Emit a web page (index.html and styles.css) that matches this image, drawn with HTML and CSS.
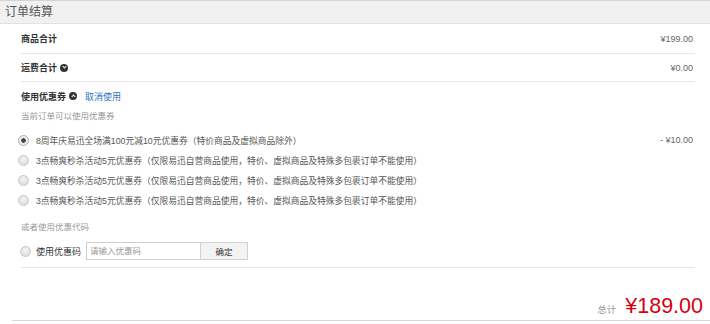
FILE: index.html
```html
<!DOCTYPE html>
<html lang="zh-CN">
<head>
  <meta charset="UTF-8">
  <title>订单结算</title>
  <link rel="stylesheet" href="styles.css">
</head>
<body>
  <div class="panel">
    <div class="panel-head">订单结算</div>
    <div class="panel-body">
      <div class="sum-row">
        <span class="sum-label">商品合计</span>
        <span class="price">¥199.00</span>
      </div>
      <div class="sum-row sum-row-short">
        <span class="sum-label">运费合计 <i class="toggle down"></i></span>
        <span class="price">¥0.00</span>
      </div>
      <div class="coupon-head">
        <span class="sum-label">使用优惠券 <i class="toggle up"></i></span>
        <a class="link" href="#">取消使用</a>
      </div>
      <div class="hint">当前订单可以使用优惠券</div>

      <ul class="coupon-list">
        <li class="coupon">
          <span class="radio checked"></span>
          <span class="coupon-name">8周年庆易迅全场满100元减10元优惠券（特价商品及虚拟商品除外）</span>
          <span class="price">- ¥10.00</span>
        </li>
        <li class="coupon">
          <span class="radio"></span>
          <span class="coupon-name">3点畅爽秒杀活动5元优惠券（仅限易迅自营商品使用，特价、虚拟商品及特殊多包裹订单不能使用）</span>
        </li>
        <li class="coupon">
          <span class="radio"></span>
          <span class="coupon-name">3点畅爽秒杀活动5元优惠券（仅限易迅自营商品使用，特价、虚拟商品及特殊多包裹订单不能使用）</span>
        </li>
        <li class="coupon">
          <span class="radio"></span>
          <span class="coupon-name">3点畅爽秒杀活动5元优惠券（仅限易迅自营商品使用，特价、虚拟商品及特殊多包裹订单不能使用）</span>
        </li>
      </ul>

      <div class="hint hint-code">或者使用优惠代码</div>
      <div class="code-row">
        <span class="radio"></span>
        <span class="code-label">使用优惠码</span>
        <input class="code-input" type="text" placeholder="请输入优惠码">
        <button class="code-btn">确定</button>
      </div>
    </div>

    <div class="total-bar">
      <span class="total-label">总计</span>
      <span class="total-price">¥189.00</span>
    </div>
  </div>
</body>
</html>
```

FILE: styles.css
```css
body {
  margin: 0;
  font-family: "Liberation Sans", "Noto Sans CJK SC", sans-serif;
  color: #333;
  background-color: #fff;
}
.panel {
  width: 710px;
}
.panel-head {
  height: 22px;
  line-height: 22px;
  padding-left: 5px;
  font-size: 12px;
  color: #555;
  background-color: #f1f1f1;
  border-top: 1px solid #d4d4d4;
  border-bottom: 1px solid #e2e2e2;
}
.panel-body {
  padding: 0 15px 0 21px;
}
.sum-row {
  display: flex;
  justify-content: space-between;
  align-items: center;
  height: 29px;
  border-bottom: 1px solid #e6e6e6;
}
.sum-row-short {
  height: 27px;
}
.sum-label {
  display: flex;
  align-items: center;
  gap: 3px;
  font-size: 9px;
  font-weight: bold;
  color: #333;
}
.price {
  font-size: 9px;
  color: #666;
  padding-right: 2px;
}
.toggle {
  display: inline-block;
  position: relative;
  width: 8px;
  height: 8px;
  border-radius: 50%;
  background-color: #333;
}
.toggle::after {
  content: "";
  position: absolute;
  left: 2.5px;
  width: 2px;
  height: 2px;
  border-right: 1px solid #fff;
  border-bottom: 1px solid #fff;
}
.toggle.down::after {
  top: 1.5px;
  transform: rotate(45deg);
}
.toggle.up::after {
  top: 3px;
  transform: rotate(-135deg);
}
.coupon-head {
  display: flex;
  align-items: center;
  gap: 8px;
  height: 28px;
}
.link {
  font-size: 9px;
  color: #2d6fc0;
  text-decoration: none;
}
.hint {
  height: 12px;
  line-height: 12px;
  font-size: 8.5px;
  color: #999;
}
.coupon-list {
  list-style: none;
  margin: 8px 0 0 -3px;
  padding: 0;
}
.coupon {
  display: flex;
  align-items: center;
  height: 20px;
}
.coupon-name {
  flex: 1;
  margin-left: 7px;
  font-size: 8.75px;
  color: #555;
}
.radio {
  display: inline-block;
  box-sizing: border-box;
  width: 11px;
  height: 11px;
  border-radius: 50%;
  border: 1px solid #c8c8c8;
  background: radial-gradient(circle at 50% 35%, #f4f4f4, #d6d6d6);
}
.radio.checked {
  background: radial-gradient(circle, #444 0 2px, #eee 2.5px);
  border-color: #b0b0b0;
}
.hint-code {
  margin-top: 11px;
  height: 13px;
  line-height: 13px;
}
.code-row {
  display: flex;
  align-items: center;
  height: 18px;
  margin-top: 8px;
  padding-bottom: 7px;
  border-bottom: 1px solid #e6e6e6;
}
.code-row .radio {
  margin-left: -1px;
}
.code-label {
  margin-left: 5px;
  font-size: 9px;
  color: #333;
}
.code-input {
  box-sizing: border-box;
  width: 114px;
  height: 18px;
  margin: 0 0 0 5px;
  padding: 0 3px;
  font-family: inherit;
  font-size: 8.5px;
  color: #333;
  border: 1px solid #cfcfcf;
  border-right: none;
  border-radius: 0;
  outline: none;
}
.code-input::placeholder {
  color: #999;
}
.code-btn {
  box-sizing: border-box;
  width: 48px;
  height: 18px;
  margin: 0;
  padding: 0;
  font-family: inherit;
  font-size: 8.5px;
  color: #333;
  background-color: #f3f3f3;
  border: 1px solid #d2d2d2;
  border-radius: 0;
}
.total-bar {
  display: flex;
  justify-content: flex-end;
  align-items: baseline;
  gap: 9px;
  height: 53px;
  margin-left: 12px;
  padding-right: 7px;
  box-sizing: border-box;
  padding-top: 26px;
  border-bottom: 1px solid #d8d8d8;
}
.total-label {
  font-size: 9.5px;
  color: #999;
}
.total-price {
  font-size: 21.5px;
  line-height: 24px;
  color: #d7000f;
}
```
